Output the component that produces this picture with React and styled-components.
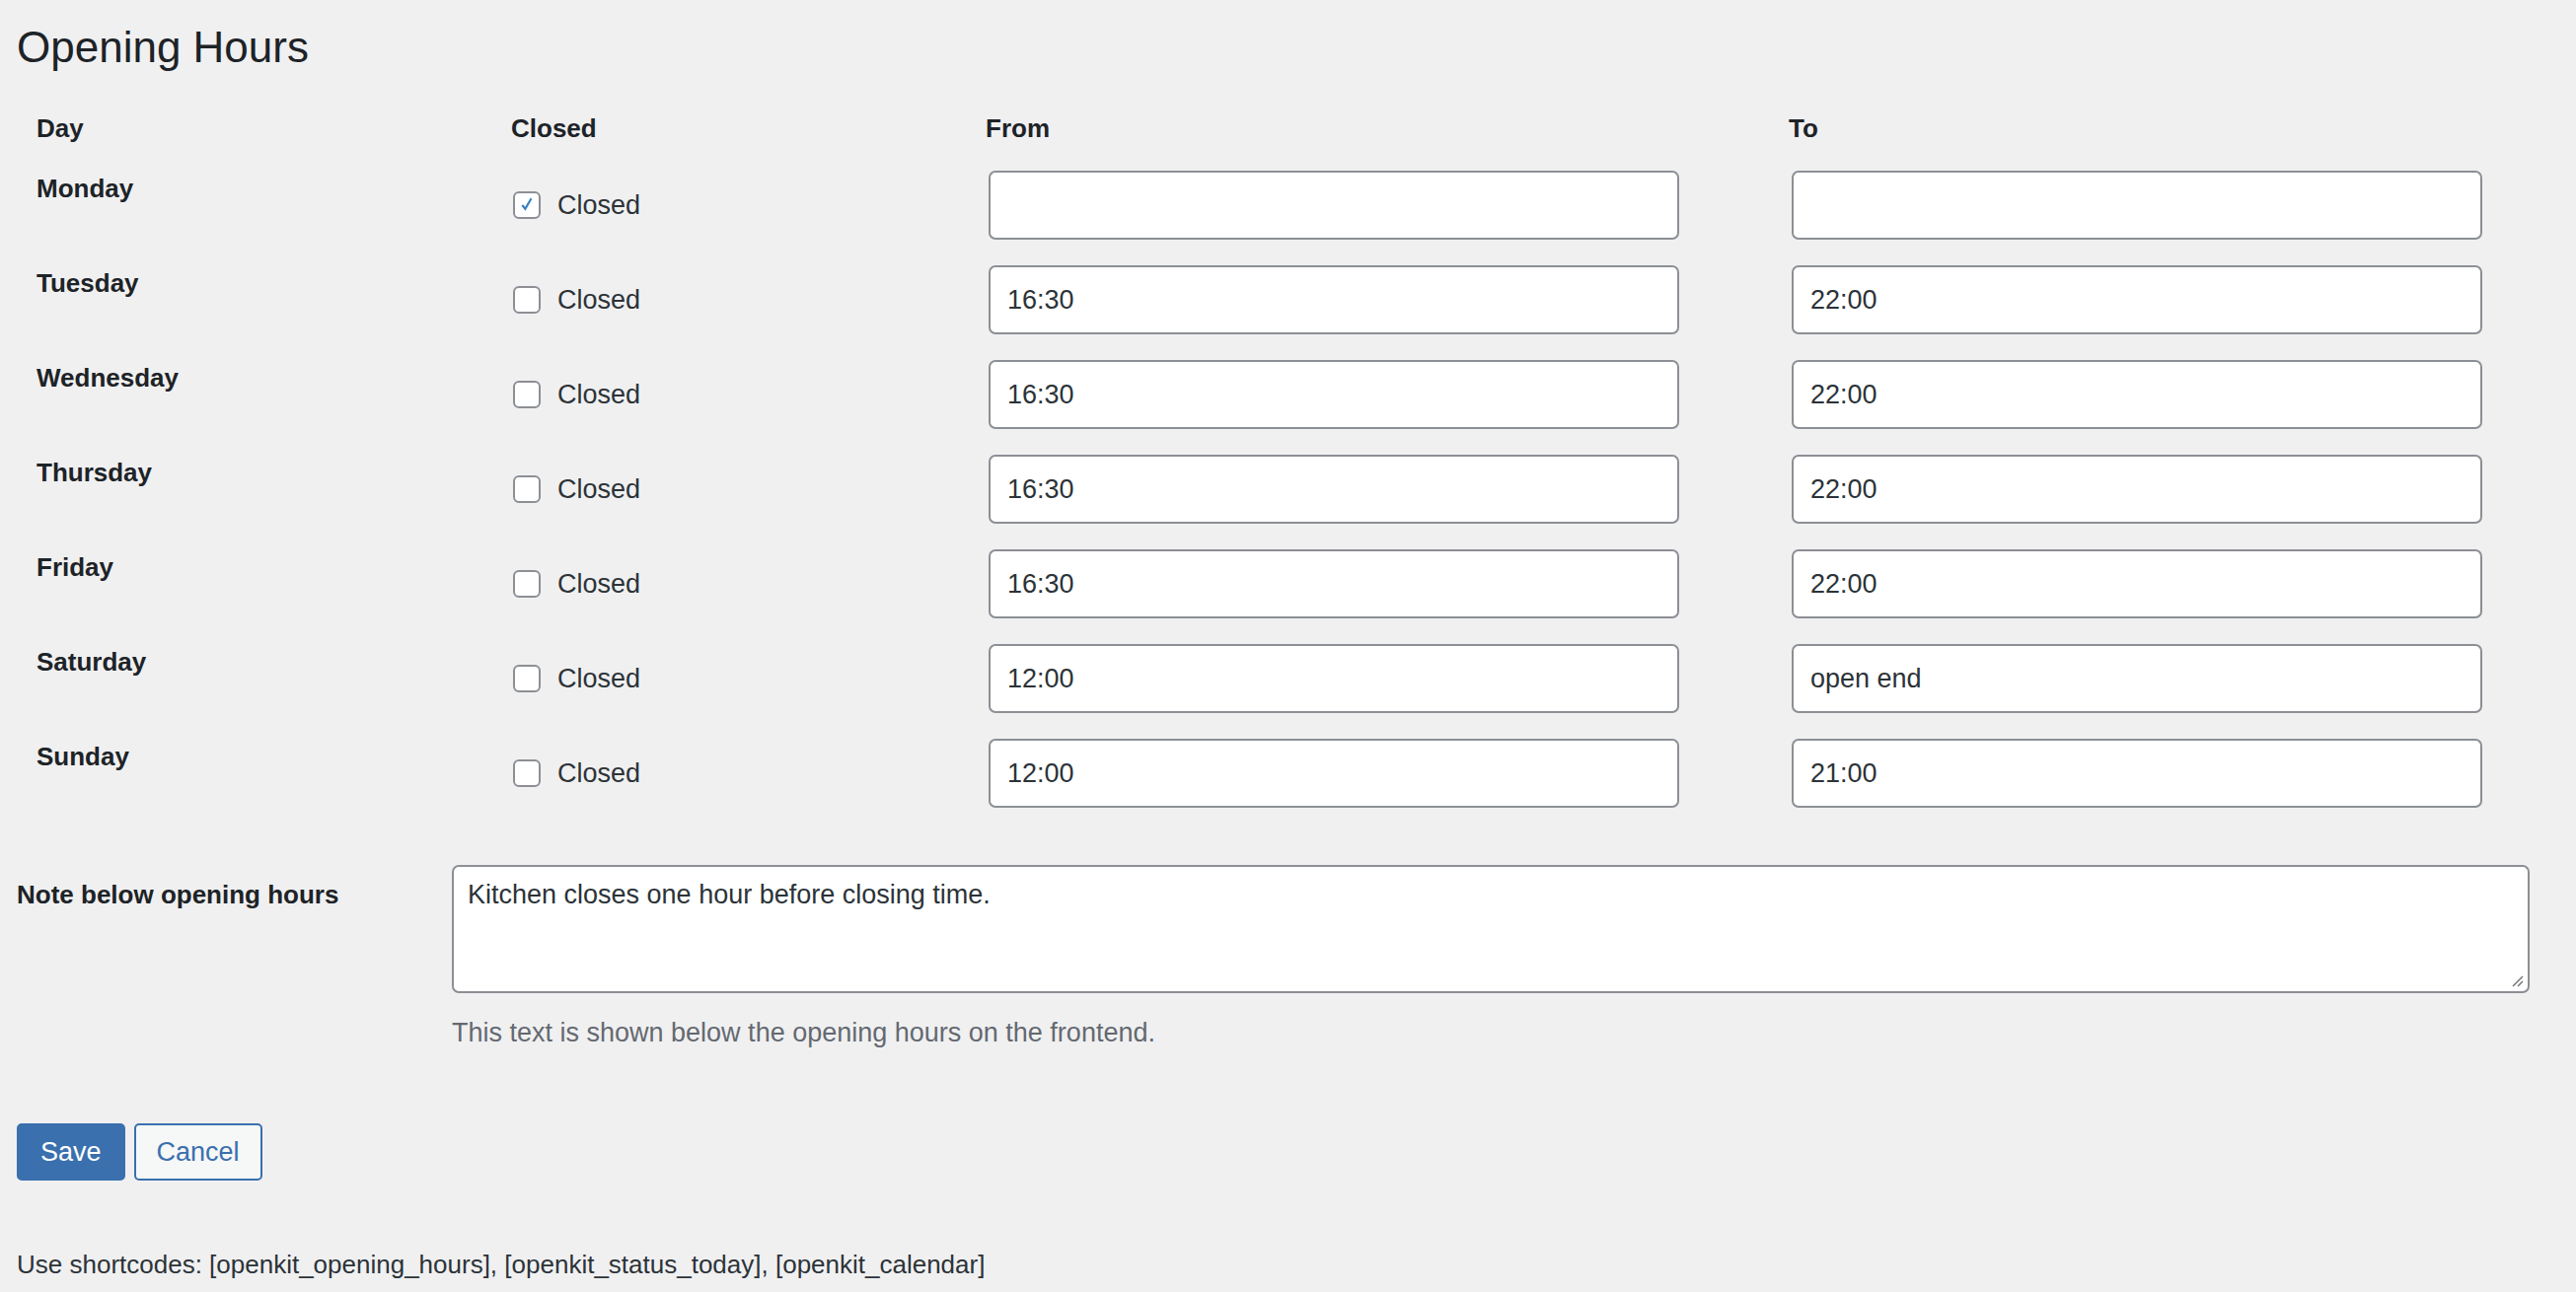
import React from 'react';
import styled, { createGlobalStyle } from 'styled-components';

const Global = createGlobalStyle`
  body {
    margin: 0;
    background: #f0f0f1;
    color: #1d2327;
    font-family: "Liberation Sans", Arial, sans-serif;
  }
`;

const Page = styled.div`
  padding: 20px 17px 0;
`;

const Title = styled.h1`
  margin: 0;
  font-size: 44px;
  font-weight: 400;
  line-height: 56px;
  color: #1d2327;
`;

const Table = styled.div`
  margin-top: 24px;
  padding-left: 20px;
  display: grid;
  grid-template-columns: 481px 481px 814px 720px;
`;

const Head = styled.div`
  height: 60px;
  display: flex;
  align-items: center;
  font-size: 26px;
  font-weight: 700;
`;

const Cell = styled.div`
  height: 96px;
  box-sizing: border-box;
  padding-top: 13px;
  display: flex;
  align-items: ${p => (p.$top ? 'flex-start' : 'center')};
  ${p => (p.$top ? '' : 'padding-bottom: 13px;')}
`;

const DayName = styled.span`
  font-size: 26px;
  font-weight: 700;
  line-height: 36px;
`;

const CheckLabel = styled.label`
  display: flex;
  align-items: center;
  gap: 17px;
  font-size: 27px;
  color: #2c3338;
`;

const Box = styled.span`
  width: 28px;
  height: 28px;
  box-sizing: border-box;
  border: 2px solid #8c8f94;
  border-radius: 6px;
  background: #fff;
  display: flex;
  align-items: center;
  justify-content: center;
  margin-left: 2px;
`;

const Input = styled.div`
  width: 700px;
  height: 70px;
  box-sizing: border-box;
  margin-left: 3px;
  border: 2px solid #8c8f94;
  border-radius: 7px;
  background: #fff;
  padding: 0 17px;
  display: flex;
  align-items: center;
  font-size: 27px;
  color: #2c3338;
`;

const NoteRow = styled.div`
  margin-top: 45px;
  display: grid;
  grid-template-columns: 441px 2106px;
`;

const NoteLabel = styled.div`
  padding-top: 12px;
  font-size: 26px;
  font-weight: 700;
  line-height: 36px;
`;

const TextArea = styled.div`
  position: relative;
  height: 130px;
  box-sizing: border-box;
  border: 2px solid #8c8f94;
  border-radius: 7px;
  background: #fff;
  padding: 10px 14px;
  font-size: 27px;
  line-height: 36px;
  color: #2c3338;
`;

const Grip = styled.svg`
  position: absolute;
  right: 4px;
  bottom: 4px;
`;

const Help = styled.p`
  margin: 22px 0 0;
  font-size: 27px;
  line-height: 36px;
  color: #646970;
`;

const Buttons = styled.div`
  margin-top: 74px;
  display: flex;
  gap: 9px;
`;

const Button = styled.button`
  height: 58px;
  padding: 0 ${p => (p.$primary ? '22px' : '21px')};
  border: 2px solid #3a70ad;
  border-radius: 5px;
  background: ${p => (p.$primary ? '#3a70ad' : '#f6f7f7')};
  color: ${p => (p.$primary ? '#fff' : '#3a70ad')};
  font-family: inherit;
  font-size: 27px;
`;

const Footer = styled.p`
  margin: 67px 0 0;
  font-size: 26px;
  line-height: 36px;
  color: #2c3338;
`;

const days = [
  ['Monday', true, '', ''],
  ['Tuesday', false, '16:30', '22:00'],
  ['Wednesday', false, '16:30', '22:00'],
  ['Thursday', false, '16:30', '22:00'],
  ['Friday', false, '16:30', '22:00'],
  ['Saturday', false, '12:00', 'open end'],
  ['Sunday', false, '12:00', '21:00'],
];

export default function App() {
  return (
    <Page>
      <Global />
      <Title>Opening Hours</Title>
      <Table>
        <Head>Day</Head>
        <Head>Closed</Head>
        <Head>From</Head>
        <Head>To</Head>
        {days.map(([day, closed, from, to]) => (
          <React.Fragment key={day}>
            <Cell $top><DayName>{day}</DayName></Cell>
            <Cell>
              <CheckLabel>
                <Box>
                  {closed && (
                    <svg width="22" height="22" viewBox="0 0 20 20">
                      <path d="M14.8 4.6 8.6 15.2 5 10.6l1.4-1.3 2 2.4 5-8.6z" fill="#3582c4" />
                    </svg>
                  )}
                </Box>
                Closed
              </CheckLabel>
            </Cell>
            <Cell><Input>{from}</Input></Cell>
            <Cell><Input>{to}</Input></Cell>
          </React.Fragment>
        ))}
      </Table>
      <NoteRow>
        <NoteLabel>Note below opening hours</NoteLabel>
        <div>
          <TextArea>
            Kitchen closes one hour before closing time.
            <Grip width="14" height="14" viewBox="0 0 14 14">
              <path d="M13 3 3 13M13 8 8 13" stroke="#777" strokeWidth="1.5" />
            </Grip>
          </TextArea>
          <Help>This text is shown below the opening hours on the frontend.</Help>
        </div>
      </NoteRow>
      <Buttons>
        <Button $primary>Save</Button>
        <Button>Cancel</Button>
      </Buttons>
      <Footer>Use shortcodes: [openkit_opening_hours], [openkit_status_today], [openkit_calendar]</Footer>
    </Page>
  );
}
